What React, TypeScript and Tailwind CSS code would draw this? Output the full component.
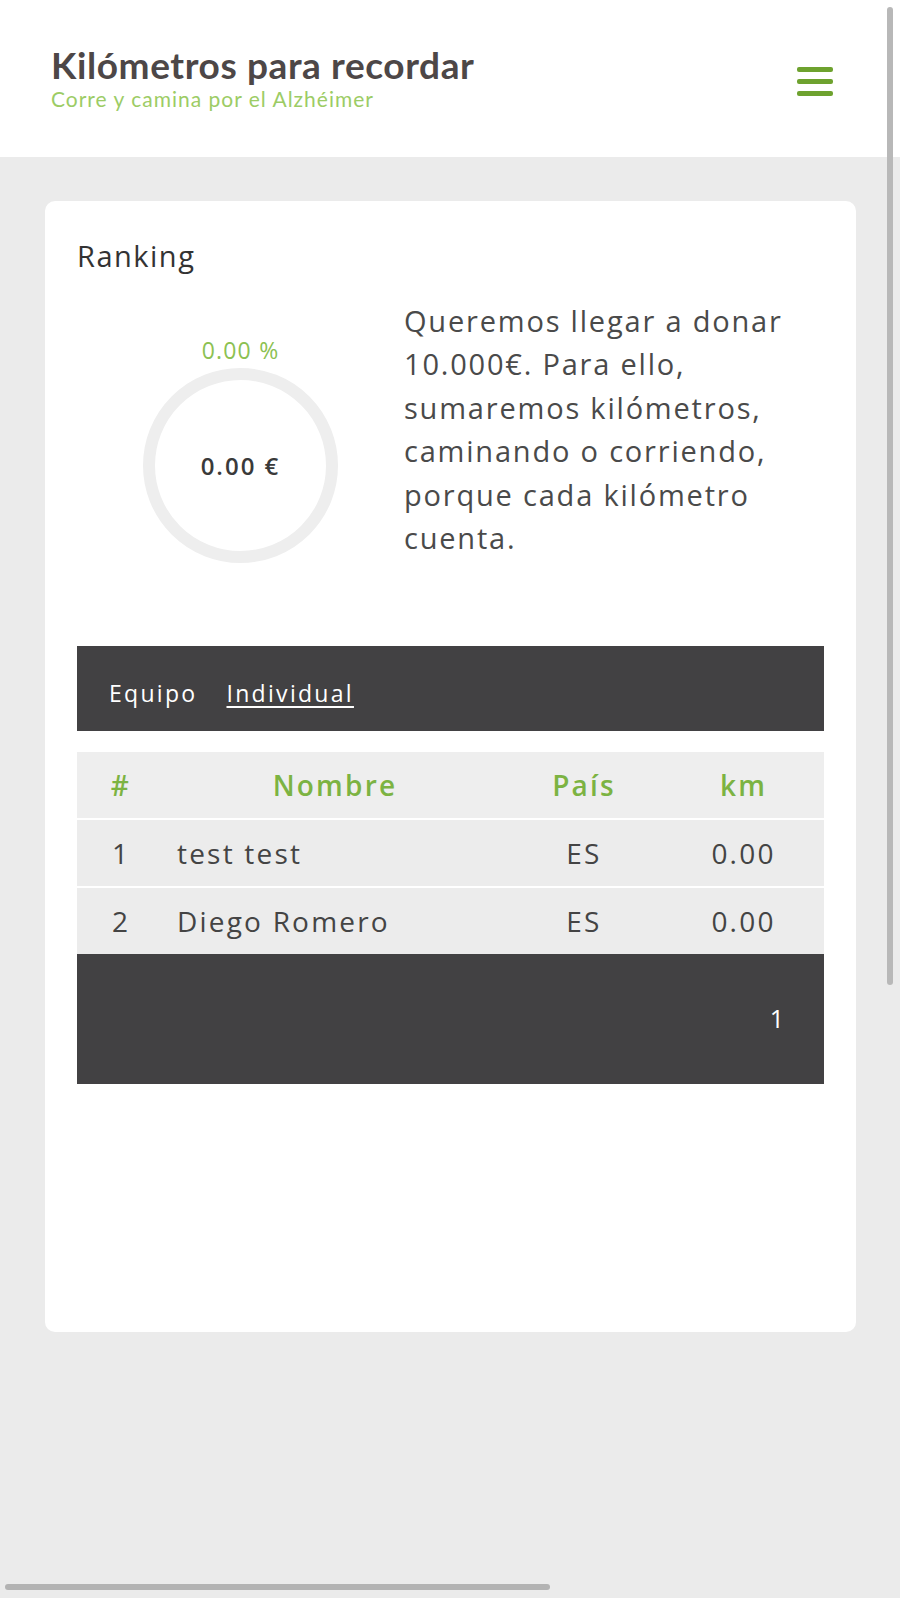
import React from "react";

const body = { fontFamily: '"Open Sans", "Noto Sans", sans-serif' };
const lato = { fontFamily: '"Lato", "Open Sans", sans-serif' };

function Hamburger() {
  return (
    <div className="flex flex-col gap-[7px] w-[36px] mt-[5px]">
      <div className="h-[5px] rounded-[2px] bg-[#6ea22f]" />
      <div className="h-[5px] rounded-[2px] bg-[#6ea22f]" />
      <div className="h-[5px] rounded-[2px] bg-[#6ea22f]" />
    </div>
  );
}

const rows = [
  { n: "1", name: "test test", c: "ES", km: "0.00" },
  { n: "2", name: "Diego Romero", c: "ES", km: "0.00" },
];

export default function App() {
  return (
    <div className="relative w-[900px] h-[1598px] bg-[#ebebeb] overflow-hidden" style={body}>
      <header className="h-[157px] bg-white flex items-center justify-between pl-[51px] pr-[67px]">
        <div className="flex flex-col gap-[3px] -mt-[1px]">
          <div className="text-[37px] leading-[38px] font-bold text-[#4d4747] tracking-[0.6px]" style={lato}>
            Kilómetros para recordar
          </div>
          <div className="text-[21px] leading-[24px] text-[#9ccc65] tracking-[1px]" style={lato}>
            Corre y camina por el Alzhéimer
          </div>
        </div>
        <Hamburger />
      </header>

      <main className="pt-[44px] pl-[45px]">
        <div className="w-[811px] h-[1131px] bg-white rounded-[10px] px-[32px] pt-[37px]">
          <h2 className="text-[29px] leading-[36px] font-medium text-[#333] tracking-[1.5px]">Ranking</h2>

          <div className="flex mt-[25px]">
            <div className="w-[327px] flex flex-col items-center pt-[36px]">
              <div className="text-[23px] leading-[30px] font-medium text-[#8cc152] tracking-[1.2px]">0.00 %</div>
              <div className="mt-[3px] w-[195px] h-[195px] rounded-full border-[12px] border-[#eeeeee] flex items-center justify-center">
                <span className="text-[24px] leading-[30px] font-semibold text-[#3a3a3a] tracking-[2px]">0.00 €</span>
              </div>
            </div>
            <p className="text-[29px] leading-[43.4px] text-[#4a4a4a] tracking-[1.8px]">
              Queremos llegar a donar
              <br />
              10.000€. Para ello,
              <br />
              sumaremos kilómetros,
              <br />
              caminando o corriendo,
              <br />
              porque cada kilómetro
              <br />
              cuenta.
            </p>
          </div>

          <div className="mt-[83px] h-[85px] bg-[#424143] flex items-start gap-[29px] pl-[32px] pt-[32px] text-[23px] leading-[30px] text-white tracking-[2.3px]">
            <span>Equipo</span>
            <span className="underline underline-offset-[4px]">Individual</span>
          </div>

          <div className="mt-[21px] flex flex-col gap-[2px]">
            <div className="h-[66px] bg-[#eeeeee] grid grid-cols-[88px_340px_158px_161px] items-center text-[28px] font-semibold text-[#7cb342] tracking-[2.2px]">
              <span className="text-center">#</span>
              <span className="text-center">Nombre</span>
              <span className="text-center">País</span>
              <span className="text-center">km</span>
            </div>
            {rows.map((r) => (
              <div
                key={r.n}
                className="h-[66px] bg-[#ececec] grid grid-cols-[88px_340px_158px_161px] items-center text-[28px] text-[#444] tracking-[2.2px]"
              >
                <span className="text-center">{r.n}</span>
                <span className="pl-[12px]">{r.name}</span>
                <span className="text-center">{r.c}</span>
                <span className="text-center">{r.km}</span>
              </div>
            ))}
          </div>

          <div className="h-[130px] bg-[#424143] flex items-center justify-end pr-[40px] text-[25px] font-medium text-white">
            1
          </div>
        </div>
      </main>

      <div className="absolute left-[887px] top-[7px] w-[6px] h-[978px] rounded-[3px] bg-[#b8b8b8]" />
      <div className="absolute left-[5px] top-[1584px] w-[545px] h-[6px] rounded-[3px] bg-[#b3b3b3]" />
    </div>
  );
}
